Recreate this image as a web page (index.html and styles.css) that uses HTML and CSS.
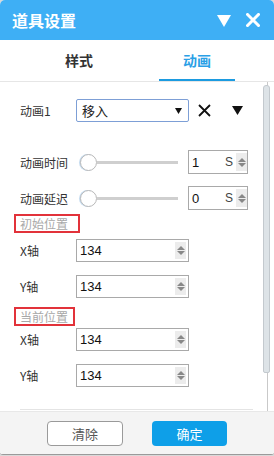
FILE: index.html
```html
<!DOCTYPE html>
<html lang="zh">
<head>
<meta charset="utf-8">
<link rel="stylesheet" href="styles.css">
</head>
<body>
<div class="win">
  <div class="header">
    <span class="title">道具设置</span>
    <span class="hicons">
      <svg class="hdown" width="14" height="12" viewBox="0 0 14 12"><polygon points="0,0 14,0 7,12" fill="#fff"/></svg>
      <svg class="hclose" width="14" height="14" viewBox="0 0 14 14"><path d="M1.5 1.5 L12.5 12.5 M12.5 1.5 L1.5 12.5" stroke="#fff" stroke-width="3" stroke-linecap="square"/></svg>
    </span>
  </div>
  <div class="tabs">
    <div class="tab">样式</div>
    <div class="tab active">动画</div>
  </div>
  <div class="body">
    <div class="content">
      <div class="row r1">
        <span class="label">动画1</span>
        <div class="select"><span>移入</span>
          <svg width="7" height="6" viewBox="0 0 7 6"><polygon points="0,0 7,0 3.5,6" fill="#111"/></svg>
        </div>
        <svg class="xicon" width="13" height="13" viewBox="0 0 13 13"><path d="M1 1 L12 12 M12 1 L1 12" stroke="#111" stroke-width="1.8"/></svg>
        <svg class="dicon" width="11" height="9" viewBox="0 0 11 9"><polygon points="0,0 11,0 5.5,9" fill="#111"/></svg>
      </div>
      <div class="row r2">
        <span class="label">动画时间</span>
        <div class="slider"><span class="knob"></span><span class="track"></span></div>
        <div class="numbox"><span class="val">1</span><span class="unit">S</span><span class="spin small"><i class="up"></i><i class="dn"></i></span></div>
      </div>
      <div class="row r3">
        <span class="label">动画延迟</span>
        <div class="slider"><span class="knob"></span><span class="track"></span></div>
        <div class="numbox"><span class="val">0</span><span class="unit">S</span><span class="spin small"><i class="up"></i><i class="dn"></i></span></div>
      </div>
      <div class="section s1">初始位置</div>
      <div class="row rx1">
        <span class="label">X轴</span>
        <div class="input"><span class="val">134</span><span class="spin"><i class="up"></i><i class="dn"></i></span></div>
      </div>
      <div class="row ry">
        <span class="label">Y轴</span>
        <div class="input"><span class="val">134</span><span class="spin"><i class="up"></i><i class="dn"></i></span></div>
      </div>
      <div class="section s2">当前位置</div>
      <div class="row rx2">
        <span class="label">X轴</span>
        <div class="input"><span class="val">134</span><span class="spin"><i class="up"></i><i class="dn"></i></span></div>
      </div>
      <div class="row ry">
        <span class="label">Y轴</span>
        <div class="input"><span class="val">134</span><span class="spin"><i class="up"></i><i class="dn"></i></span></div>
      </div>
      <div class="hr"></div>
    </div>
    <div class="scroll"><div class="thumb"></div></div>
  </div>
  <div class="footer">
    <button class="btn clear">清除</button>
    <button class="btn ok">确定</button>
  </div>
</div>
</body>
</html>
```
FILE: styles.css
```css
* { box-sizing: border-box; }
html, body { margin: 0; padding: 0; }
body {
  width: 274px; height: 456px; overflow: hidden;
  background: #d9d9d9;
  font-family: "Noto Sans CJK SC", "Liberation Sans", sans-serif;
  color: #222;
}
.win {
  width: 274px; height: 455px;
  background: #fff;
  border-radius: 5px 5px 3px 3px;
  overflow: hidden;
  display: flex; flex-direction: column;
  border-bottom: 1px solid #9a9a9a;
}
.header {
  height: 40px; background: #3eaff5;
  display: flex; align-items: center; justify-content: space-between;
  padding: 0 14px 0 12px;
}
.title { color: #fff; font-size: 16px; font-weight: bold; letter-spacing: 0; line-height: 1; }
.hicons { display: flex; align-items: center; gap: 15px; }
.hdown { margin-top: 1px; }
.tabs {
  height: 42px; display: flex; border-bottom: 1px solid #e6e6e6;
  padding-left: 41px;
}
.tab {
  width: 76px; text-align: center; font-size: 14px; font-weight: bold; color: #333;
  line-height: 40px; border-bottom: 2px solid transparent;
}
.tab + .tab { margin-left: 42px; }
.tab.active { color: #2aa0e6; border-bottom-color: #1c9be0; }
.body { flex: 1; display: flex; min-height: 0; }
.content { flex: 1; padding-left: 20px; padding-right: 8px; }
.row { display: flex; align-items: center; height: 23px; font-size: 12px; }
.label { width: 56px; flex: none; color: #333; }
.r1 { margin-top: 17px; }
.r2 { margin-top: 28px; height: 24px; }
.r3 { margin-top: 12px; height: 24px; }
.rx1 { margin-top: 5px; }
.rx2 { margin-top: 1px; }
.ry { margin-top: 13px; }
.select {
  width: 113px; height: 23px; border: 1px solid #7d9fd6; border-radius: 2px;
  display: flex; align-items: center; justify-content: space-between;
  padding: 0 6px 0 5px; font-size: 13px; color: #222;
}
.xicon { margin-left: 9px; }
.dicon { margin-left: 21px; }
.slider { width: 112px; display: flex; align-items: center; position: relative; }
.knob {
  width: 17px; height: 17px; border-radius: 50%; border: 1px solid #b9b9b9; background: #fff;
  margin-left: 4px; flex: none; box-shadow: -1px 0 0 #c6dcf0;
}
.track { width: 81px; height: 3px; background: #cfcfcf; }
.numbox, .input {
  height: 100%; border: 1px solid #a9a9a9; display: flex; align-items: center;
  font-family: "Liberation Sans", Arial, sans-serif; font-size: 13px; color: #111;
}
.numbox { width: 60px; padding-left: 3px; }
.numbox .val { width: 33px; }
.unit { width: 11px; color: #444; font-size: 12px; }
.input { width: 113px; padding-left: 3px; justify-content: space-between; padding-right: 2px; }
.spin {
  width: 11px; height: 17px; background: #ececec; display: flex; flex-direction: column;
  align-items: center; justify-content: center; gap: 1px;
}
.spin.small { height: 18px; }
.spin i { display: block; width: 0; height: 0; border-left: 4px solid transparent; border-right: 4px solid transparent; }
.spin .up { border-bottom: 4px solid #888; }
.spin .dn { border-top: 4px solid #888; }
.section {
  display: inline-block; height: 19px; border: 2px solid #e2323a;
  font-size: 12px; color: #a8a8a8; line-height: 15px; padding: 0 4px 0 4px;
  margin-left: -6px;
}
.s1 { margin-top: 4px; width: 66px; }
.s2 { margin-top: 9px; width: 61px; }
.hr { height: 1px; background: #e4e4e4; margin-top: 22px; width: 233px; }
.scroll { width: 13px; flex: none; position: relative; }
.scroll::after {
  content: ""; position: absolute; left: 6px; top: 0; bottom: 0; width: 1px; background: #c9c9c9;
}
.thumb {
  position: relative; z-index: 1;
  width: 7px; height: 288px; margin-top: 3px; margin-left: 2px;
  background: #dde3e7; border: 1px solid #c3c9ce; border-radius: 3px 3px 2px 2px;
}
.footer {
  height: 43px; background: #f4f4f4; border-top: 1px solid #e8e8e8;
  display: flex; align-items: center; padding-left: 47px; gap: 29px;
}
.btn {
  width: 75px; height: 25px; border-radius: 4px; font-size: 13px;
  font-family: "Noto Sans CJK SC", sans-serif; padding: 0; line-height: 1;
}
.clear { background: #fff; border: 1px solid #9a9a9a; color: #555; width: 76px; }
.ok { background: #0e9fe8; border: none; color: #fff; }
```
